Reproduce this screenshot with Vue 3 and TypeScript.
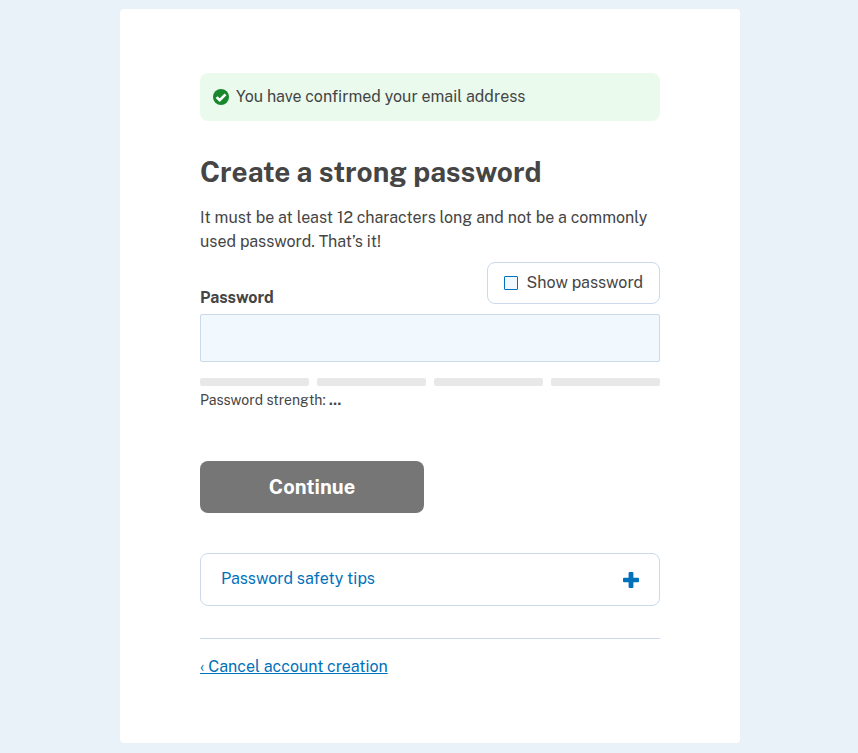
<script setup lang="ts">
import { ref } from 'vue'

const password = ref('')
const visible = ref(false)
const bars: number[] = [1, 2, 3, 4]
</script>

<template>
  <main class="card">
    <div class="alert">
      <svg class="check" viewBox="0 0 16 16" aria-hidden="true"><circle cx="8" cy="8" r="8" fill="#19872c" /><path d="M3.600 8.100l3.100 3.100 5.800-5.800" fill="none" stroke="#fff" stroke-width="2.700" /></svg>
      <span>You have confirmed your email address</span>
    </div>
    <h1>Create a strong password</h1>
    <p class="intro">It must be at least 12 characters long and not be a commonly<br>used password. That’s it!</p>
    <div class="field-head">
      <label class="label" for="password">Password</label>
      <label class="toggle"><input v-model="visible" type="checkbox"><span>Show password</span></label>
    </div>
    <input id="password" v-model="password" class="field" :type="visible ? 'text' : 'password'">
    <div class="meter"><i v-for="bar in bars" :key="bar" /></div>
    <div class="strength"><span>Password strength:</span> <b>...</b></div>
    <button class="continue" type="button">Continue</button>
    <button class="tips" type="button">
      <span>Password safety tips</span>
      <svg viewBox="0 0 16 16" aria-hidden="true"><g fill="#0071bb"><rect x="5.600" width="4.800" height="16" rx="1" /><rect y="5.700" width="16" height="4.600" rx="1" /></g></svg>
    </button>
    <footer><a href="#">‹ Cancel account creation</a></footer>
  </main>
</template>

<style>
body { background: #e9f2f9; }
</style>
<style scoped>
* { box-sizing: border-box; }
.card { width: 620px; height: 734px; margin: 9px 0 0 120px; padding: 64px 80px 0; background: #fff; border-radius: 4px; color: #454545; font: 16px/24px "Public Sans", Inter, "Liberation Sans", sans-serif; }
.alert { display: flex; align-items: center; height: 48px; padding: 0 13px; background: #eafbee; border-radius: 8px; }
.check { width: 16px; height: 16px; margin-right: 7px; }
h1 { margin: 32px 0 15px; font-size: 28px; line-height: 38px; font-weight: 700; }
.intro { margin: 0; white-space: nowrap; }
.field-head { display: flex; justify-content: space-between; margin-top: 8px; height: 42px; }
.label { font-weight: 700; padding-top: 24px; }
.toggle { display: flex; align-items: center; width: 173px; height: 42px; padding-left: 16px; border: 1px solid #cbd9eb; border-radius: 8px; white-space: nowrap; }
.toggle input { appearance: none; width: 14px; height: 14px; margin: 0 8.500px 0 0; border: 1px solid #0071bb; border-radius: 1px; background: #f1f9ff; }
.field { display: block; width: 460px; height: 48px; margin: 10px 0 16px; padding: 12px; border: 1px solid #cbd9eb; border-radius: 2px; background: #f1f9ff; color: inherit; font: inherit; }
.meter { display: grid; grid-template-columns: repeat(4, 1fr); gap: 8px; }
.meter i { height: 8px; background: #e8e8e8; border-radius: 2px; }
.strength { height: 28px; line-height: 28px; font-size: 14px; }
.continue { display: block; width: 224px; height: 52px; margin: 47px 0 40px; padding: 0; border: 0; border-radius: 8px; background: #767676; color: #fff; font: inherit; font-size: 20px; font-weight: 700; }
.tips { display: flex; align-items: center; justify-content: space-between; width: 460px; height: 53px; padding: 0 20px; border: 1px solid #cbd9eb; border-radius: 8px; background: #fff; color: #0071bb; font: inherit; }
.tips span { padding-bottom: 2px; }
.tips svg { width: 16px; height: 16px; }
footer { margin-top: 32px; padding-top: 16px; border-top: 1px solid #cbd9eb; }
a { color: #0071bb; }
</style>
